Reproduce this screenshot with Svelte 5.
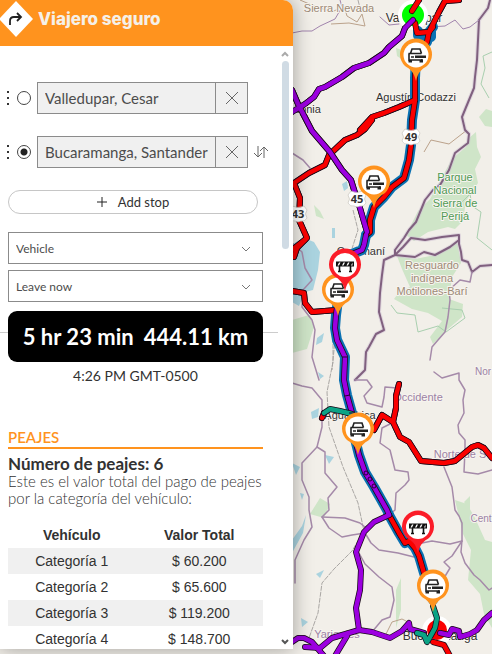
<script>
  let origin = $state('Valledupar, Cesar');
  let destination = $state('Bucaramanga, Santander');
  let active = $state('b');

  const tolls = [
    ['Categoría 1', '$ 60.200'],
    ['Categoría 2', '$ 65.600'],
    ['Categoría 3', '$ 119.200'],
    ['Categoría 4', '$ 148.700']
  ];

  const borders = [
    '490,0 488,8 479,20 477,60 475,77 474,88 469,100 462,117 465,130 469,134 468,143 455,153 449,170 440,185 433,190 425,200 416,222 409,230 404,238 395,250 395,255 384,260 382,275 380,293 379,312 384,330 376,334 369,347 366,352 365,370 355,380',
    '395,255 403,247 411,238 425,240 442,237 459,235 459,244 461,252 462,260 468,262 472,272 480,266 492,265',
    '395,255 415,257 424,252 435,255 450,247 459,240'
  ];
  const softBorders = [
    '472,272 470,282 460,280 449,290 450,300 448,317 445,332 438,340 432,347 430,360',
    '434,372 442,378 459,373 459,380 465,390 463,400 464,413 458,425 459,433 465,440 465,450 464,472 478,474 492,470',
    '444,467 452,487 455,510 459,516 462,523 462,540 461,552 465,563 474,575 480,580 489,590 492,588',
    '462,541 450,544 432,541 422,543',
    '462,541 452,556 444,562 450,568 444,578',
    '292,383 302,386 312,388 322,400 322,427 317,447 302,463 302,480 309,497 309,510 312,527 304,540 295,560 295,583',
    '317,447 325,452 325,473 337,487 328,498 329,510 322,517 329,528 342,537 352,535 365,533 371,543 379,550 398,553 414,557',
    '322,517 345,518 360,523 365,527 383,520 395,510 396,493 405,485 409,480 408,472 395,470 390,450 380,443 382,428 392,423',
    '359,553 365,564 379,577 392,587 394,600 390,617 382,620 372,632',
    '355,380 367,380 372,387 364,396 367,403 382,407 384,397 385,387 397,388 400,394',
    '292,243 302,252 305,268 312,280 303,290 302,307 312,320 315,330 312,357 319,380',
    '292,153 303,160 310,168'
  ];
  const thin = [
    '292,33 302,31 312,31 320,26 335,19 342,7 340,0',
    '430,27 445,26 455,20 463,29 470,27 479,20',
    '380,17 389,25 399,24'
  ];

  const west = '413,20 405,28 402,36 389,47 384,53 369,63 354,68 342,77 325,87 319,89 314,97 305,104 292,112';
  const south = '292,90 298,104 312,131 330,152 342,170 351,180 355,193 360,208 367,232';
  const mainRed = '433,27 429,32 427,42 416,56 415,78 415,100 412,120 411,145 409,160 404,178 392,187 384,197 374,207 370,220 370,232 366,235';
  const mainPurple = '366,235 364,245 362,250 352,254 343,270 338,300 336,315 335,328 337,340 345,357 344,380 347,395 352,413 354,435 359,455 365,472 374,487 387,510 389,515';
  const mainEnd = '389,515 399,533 405,543 409,541 415,548 419,556 424,573 433,600';
  const reds = [
    '419,0 412,11',
    '459,0 445,1 439,12 429,32 417,33 415,23',
    '415,100 399,107 384,113 372,117 360,130',
    '372,120 365,129 357,135 345,140 329,155 325,165 309,173 294,183 300,198 299,220 307,238 292,250',
    '305,240 297,248 294,257',
    '292,291 304,293 305,303 312,312 337,310',
    '322,418 324,413',
    '374,430 382,415 393,422 400,437 409,442 421,461 444,463 455,461 472,447 478,445 484,448 492,458',
    '393,422 396,408 396,396 399,384'
  ];
  const purples = [
    '389,515 374,522 364,532 356,552 361,570 360,590 356,608 359,630',
    '292,642 298,638 304,638 312,642 324,656',
    '305,647 320,648 332,638 359,630 372,632 390,638 402,631 409,623 410,629 424,633',
    '335,656 347,636',
    '440,633 449,635 452,629 459,631 460,637 470,634 477,630 484,620 492,613'
  ];

  const cars = [[416, 55], [374, 182], [338, 290], [358, 429], [433, 586]];
  const gates = [[345, 265], [418, 527]];
  const shields = [['49', 411, 137], ['45', 357, 199], ['43', 298, 214]];
</script>

<main>
  <svg class="map" viewBox="0 0 492 654" preserveAspectRatio="xMinYMin slice" role="img" aria-label="Mapa de la ruta">
    <rect width="492" height="654" fill="#f2efe9" />
    <g fill="#cfe5c8">
      <path d="M469 138l7-6 1 15 4 10-6 12 3 14-12 18-3 20-8 8-7-2-20 5-14 9-8-6 12-24 12-12 22-40 14-12z" />
      <path d="M397 256l18 3 20-4 22-14 4 22-9 14-3 22 14 5-1 13-14 12-15 15-3-7 12-16-14-8-16-4-18-10 6-8 10-4-8-18z" />
      <path d="M292 320l17-5 5 12-7 22-15 4zM455 500l12 4 8 14 10 22 7 2v86l-8-14-4-20-12-14 3-30-8-16zM320 498l10 6-6 14-14-4zM396 48l6 2 1 10-6-4zM479 117l7-8 6 2v16l-7-1zM314 205l6 6 4 8-8-3zM396 590l5-12v32l-5 18zM470 510l-6-8 6-6z" />
    </g>
    <g fill="none" stroke="#a9cfaf" stroke-width="1">
      <path d="M492 52l-9 4 2 12-4 16 8 14M458 206l12-12 2 12 9 6-4 26 15 12M391 305l6 8 18 2 3 17 20-6 8 6 19-14-3-8-20-2" />
    </g>
    <g fill="#aad3df">
      <path d="M292 244l12-6 10 4 6 10-2 18-5 20-8 2-6 14-7-4z" />
      <path d="M342 184l5-3 1 7-4 3zM332 228h3v10h-3zM317 338l7-5-2 9-6 3zM318 372l6 4-4 3zM292 463l8 4-4 8zM311 412l8-4-1 9-6 2zM325 455l9 2-5 7zM300 493l4 1-2 6zM301 618l7 4-6 5zM316 574l8-4-4 8zM292 540l10-14 4-11-3 18-11 20z" />
    </g>
    <g fill="none" stroke="#bba28b" stroke-width="1">
      <path d="M300 0l14 6 18 6 12-6 3 10 10 6 5-8 3 12-16-3-18 1M424 152l7-12 18 4 18-14M385 636l7-14 10-3 8 4" />
    </g>
    <g fill="none" stroke="#aaa7a4" stroke-width="1" stroke-dasharray="5 1">
      <path d="M367 232l-8 20-16 20-8 30-2 30 0 30-6 30 2 35 14 40 15 36 6 28-12 20-18 18-12 14-4 30-9 25M358 0l2 8M353 210l5 20-9 28M337 320l-5 50" />
    </g>

    <g class="line border-halo">
      {#each borders as p}<polyline points={p} />{/each}
    </g>
    <g class="line border">
      {#each borders as p}<polyline points={p} />{/each}
    </g>
    <g class="line soft">
      {#each softBorders as p}<polyline points={p} />{/each}
    </g>
    <g class="line thin">
      {#each thin as p}<polyline points={p} />{/each}
    </g>

    <g class="labels">
      <g fill="#9d8a76">
        <text x="339" y="12">Sierra Nevada</text>
        <text x="432" y="269">Resguardo</text>
        <text x="432" y="282">indígena</text>
        <text x="432" y="295">Motilones-Barí</text>
      </g>
      <g fill="#4f9a54">
        <text x="455" y="181">Parque</text>
        <text x="455" y="194">Nacional</text>
        <text x="455" y="207">Sierra de</text>
        <text x="455" y="220">Perijá</text>
      </g>
      <g fill="#9c82a5">
        <text x="418" y="401">Occidente</text>
        <text x="460" y="458">Norte de S</text>
        <text x="483" y="375" font-size="10">Nor</text>
        <text x="481" y="522" font-size="10">Cent</text>
        <text x="337" y="638">Yariguíes</text>
      </g>
    </g>

    <g class="line casing"><polyline points={west} /><polyline points={south} /></g>
    <g class="line purple"><polyline points={west} /><polyline points={south} /></g>
    <g class="line casing">{#each reds as p}<polyline points={p} />{/each}</g>

    <g class="labels towns">
      <text class="city" x="414" y="22">Valledupar</text>
      <text x="416" y="101">Agustín Codazzi</text>
      <text x="298" y="113">Fundonia</text>
      <text x="361" y="255">Curumaní</text>
      <text x="350" y="419">Aguachica</text>
      <text class="city" x="440" y="640">Bucaramanga</text>
    </g>
    <circle cx="413" cy="15" r="15" fill="#fff" />
    <circle cx="437" cy="631" r="15" fill="#fff" />
    <circle cx="413" cy="15" r="11" fill="#0f0" />
    <circle cx="437" cy="630" r="10" fill="#fa0000" />

    <g class="line route">
      <polyline points={mainRed} /><polyline points={mainPurple} /><polyline points={mainEnd} />
      <polyline points="418,31 418,35 431,37 431,32" />
    </g>
    <g class="line casing">
      <polyline points={mainRed} /><polyline points={mainEnd} />
      {#each reds as p}<polyline points={p} />{/each}
    </g>
    <g class="line red">
      <polyline points={mainRed} /><polyline points={mainEnd} />
      {#each reds as p}<polyline points={p} />{/each}
    </g>
    <g class="line casing">
      <polyline points={west} /><polyline points={south} /><polyline points={mainPurple} />
      {#each purples as p}<polyline points={p} />{/each}
    </g>
    <g class="line purple">
      <polyline points={west} /><polyline points={south} /><polyline points={mainPurple} />
      {#each purples as p}<polyline points={p} />{/each}
    </g>
    <g class="line casing">
      <polyline points="324,413 330,409 340,411 352,414" />
      <polyline points="433,606 437,618 435,628 430,637 427,642 424,635 417,633" />
      <polyline points="433,642 444,645 450,656" />
    </g>
    <g class="line teal">
      <polyline points="324,413 330,409 340,411 352,414" />
      <polyline points="433,606 437,618 435,628 430,637 427,642 424,635 417,633" />
    </g>
    <g class="line red"><polyline points="433,642 444,645 450,656" /></g>
    <g fill="none" stroke="#210036" stroke-width="1">
      <circle cx="366" cy="473" r="2" /><circle cx="370" cy="479" r="2" /><circle cx="374" cy="486" r="2" />
      <path d="M342 357h5M345 396l5-1M349 413h6" />
    </g>

    {#each shields as [n, x, y]}
      <g transform="translate({x} {y})">
        <path d="M-6-8q6 3 12 0l3 4q-3 4 0 8-2 4-6 3l-3 1-3-1q-4 1-6-3 3-4 0-8z" fill="#fff" stroke="#c9c5bf" stroke-width=".7" />
        <text class="shield" y="4">{n}</text>
      </g>
    {/each}

    {#each cars as [x, y]}
      <g transform="translate({x} {y})">
        <path d="M0 26C-2 17-6 14-11 11A16 16 0 1 1 11 11C6 14 2 17 0 26z" fill="#ff931e" />
        <circle r="12.5" fill="#fff" />
        <path d="M-5.500-1.500l1.500-4.500h8l1.500 4.500M-7.500-1.500h13M-7-1.500v6.500H6V4M-5 2h3" fill="none" stroke="#222" stroke-width="1.600" />
        <path d="M-1 0.500h11v2.500H-1zM-7.500 5h3.500v2.500h-3.500zM3.500 5H7v2.500H3.500z" fill="#222" />
      </g>
    {/each}
    {#each gates as [x, y]}
      <g transform="translate({x} {y})">
        <path d="M0 26C-2 17-6 14-11 11A16 16 0 1 1 11 11C6 14 2 17 0 26z" fill="#fb1c28" />
        <circle r="12" fill="#fff" />
        <path d="M-9-3.500H9V1.500H-9z" fill="#111" />
        <path d="M-7.500 .5l1.500-3h1.500l-1.500 3zM-3 .5l1.500-3H0L-1.500 .5zM1.500 .5l1.500-3h1.500L3 .5zM6 .5l1.500-3v3z" fill="#fff" />
        <path d="M-5.500 1v5.500M5.500 1v5.500M-7 6.500h3M4 6.500h3" stroke="#111" stroke-width="1.600" />
      </g>
    {/each}
  </svg>

  <section class="panel">
    <header>
      <svg width="36" height="38" viewBox="0 0 36 38" aria-hidden="true">
        <path d="M0 19L17 1L34 19L17 37z" fill="#fff" />
        <path d="M11 25v-4q0-4 4-4h7M18 13l4 4-4 4" fill="none" stroke="#222" stroke-width="1.800" />
      </svg>
      <h1>Viajero seguro</h1>
    </header>

    <div class="scroller">
      <div class="content">
        <div class="stop">
          <svg class="grip" viewBox="0 0 4 16" aria-hidden="true"><path d="M0 1h2v2H0zM0 7h2v2H0zM0 13h2v2H0z" /></svg>
          <input type="radio" name="stop" value="a" bind:group={active} aria-label="Origen" />
          <div class="field">
            <input type="text" bind:value={origin} aria-label="Punto de partida" />
            <button aria-label="Borrar origen" onclick={() => (origin = '')}>
              <svg width="12" height="12" viewBox="0 0 12 12"><path d="M0 0l12 12M12 0L0 12" /></svg>
            </button>
          </div>
        </div>
        <div class="stop">
          <svg class="grip" viewBox="0 0 4 16" aria-hidden="true"><path d="M0 1h2v2H0zM0 7h2v2H0zM0 13h2v2H0z" /></svg>
          <input type="radio" name="stop" value="b" bind:group={active} aria-label="Destino" />
          <div class="field">
            <input type="text" bind:value={destination} aria-label="Punto de llegada" />
            <button aria-label="Borrar destino" onclick={() => (destination = '')}>
              <svg width="12" height="12" viewBox="0 0 12 12"><path d="M0 0l12 12M12 0L0 12" /></svg>
            </button>
          </div>
          <button class="swap" aria-label="Invertir" onclick={() => ([origin, destination] = [destination, origin])}>
            <svg width="16" height="14" viewBox="0 0 16 14"><path d="M5 1v11M1 8l4 4 4-4M11 13V2M7 6l4-4 4 4" /></svg>
          </button>
        </div>

        <button class="add">
          <svg width="10" height="10" viewBox="0 0 10 10" aria-hidden="true"><path d="M5 0v10M0 5h10" /></svg>
          Add stop
        </button>

        <div class="select">
          <select aria-label="Travel mode"><option>Vehicle</option></select>
          <svg width="10" height="6" viewBox="0 0 10 6" aria-hidden="true"><path d="M1 1l4 4 4-4" /></svg>
        </div>
        <div class="select">
          <select aria-label="Departure"><option>Leave now</option></select>
          <svg width="10" height="6" viewBox="0 0 10 6" aria-hidden="true"><path d="M1 1l4 4 4-4" /></svg>
        </div>

        <div class="total">
          <p class="summary"><span>5 hr 23 min</span><span>444.11 km</span></p>
        </div>
        <p class="arrival">4:26 PM GMT-0500</p>

        <h2>PEAJES</h2>
        <h3>Número de peajes: 6</h3>
        <p class="note">Este es el valor total del pago de peajes por la categoría del vehículo:</p>

        <table>
          <thead><tr><th>Vehículo</th><th>Valor Total</th></tr></thead>
          <tbody>
            {#each tolls as [name, price]}
              <tr><td>{name}</td><td>{price}</td></tr>
            {/each}
          </tbody>
        </table>
      </div>
      <div class="bar" aria-hidden="true">
        <svg width="8" height="6" viewBox="0 0 8 6"><path d="M1 5l3-3 3 3" stroke="#aaa" /></svg>
        <span class="thumb"></span>
        <svg width="8" height="6" viewBox="0 0 8 6"><path d="M1 1l3 3 3-3" stroke="#555" /></svg>
      </div>
    </div>
  </section>
</main>

<style>
  :global(body) { margin: 0; overflow: hidden; }
  main {
    position: relative;
    height: 100vh;
    overflow: hidden;
    background: #f2efe9;
    color: #323232;
    font-family: Lato, "Open Sans", sans-serif;
  }
  * { box-sizing: border-box; }
  h1, h2, h3, p { margin: 0; }
  button { font: inherit; color: inherit; background: none; border: 0; padding: 0; }

  .map { position: absolute; inset: 0; width: 100%; height: 100%; }
  .line { fill: none; stroke-linejoin: round; stroke-linecap: round; }
  .border-halo { stroke: #cdbfd2; stroke-width: 4; opacity: 0.5; }
  .border { stroke: #80607f; stroke-width: 2; }
  .soft { stroke: #a58aa9; stroke-width: 1.5; }
  .thin { stroke: #a184ad; stroke-width: 1; }
  .route { stroke: #0a71b3; stroke-width: 10; }
  .casing { stroke: #180818; stroke-width: 6; }
  .red { stroke: #fa0000; stroke-width: 4.5; }
  .purple { stroke: #9c00e0; stroke-width: 4.5; }
  .teal { stroke: #0ba385; stroke-width: 4.5; }
  .labels { font: 11px "Liberation Sans", sans-serif; text-anchor: middle; paint-order: stroke; stroke: #f7f4ef; stroke-width: 2px; stroke-linejoin: round; }
  .towns { fill: #333; }
  .city { font-size: 12px; }
  .shield { font: bold 11px "Noto Sans", sans-serif; fill: #333; text-anchor: middle; }

  .panel {
    position: relative;
    display: flex;
    flex-direction: column;
    width: 60%;
    min-width: 293px;
    max-width: 293px;
    height: calc(100% - 5px);
    background: #fff;
    border-top-right-radius: 10px;
    box-shadow: 0 0 20px rgba(0, 0, 0, 0.35);
  }
  header {
    display: flex;
    flex: none;
    align-items: flex-start;
    gap: 3px;
    height: 46px;
    background: #ff931e;
    border-top-right-radius: 10px;
  }
  header svg { margin-left: -1px; }
  h1 { font: 800 17px/38px Inter, sans-serif; color: #f5f0e8; }

  .scroller { display: flex; flex: 1; min-height: 0; overflow: hidden; }
  .content { flex: 1; min-width: 0; padding: 36px 18px 0 8px; }
  .bar { display: flex; flex-direction: column; align-items: center; width: 8px; margin: 5px 4px 4px 0; }
  .bar svg { flex: none; fill: none; stroke-width: 2; }
  .thumb { width: 7px; height: 188px; margin: 4px 0 auto; border-radius: 4px; background: #d0dbe4; }

  .stop { display: flex; align-items: center; height: 32px; margin-bottom: 22px; }
  .grip { flex: none; width: 4px; height: 16px; margin: 0 5px 0 -1px; fill: #333; }
  .stop input[type="radio"] {
    appearance: none;
    flex: none;
    width: 14px;
    height: 14px;
    margin: 0 6px 0 1px;
    border: 1px solid #444;
    border-radius: 50%;
    background: #fff;
  }
  .stop input[type="radio"]:checked { background: radial-gradient(circle, #222 0 3px, #fff 4px); }
  .field { display: flex; flex: none; width: 211px; height: 32px; border: 1px solid #8b8b8b; background: #f0f0f0; }
  .field input {
    flex: 1;
    min-width: 0;
    padding: 0 0 0 7px;
    border: 0;
    outline: 0;
    background: none;
    font: 15px Lato, sans-serif;
    color: #4c4c4c;
  }
  .field button { display: grid; place-items: center; width: 32px; border-left: 1px solid #8b8b8b; }
  .field svg, .swap svg { fill: none; stroke: #666; stroke-width: 1; }
  .swap { display: grid; flex: none; margin-left: 5px; }

  .add {
    display: flex;
    align-items: center;
    justify-content: center;
    gap: 11px;
    width: 250px;
    height: 24px;
    margin-bottom: 18px;
    border: 1px solid #c6c6c6;
    border-radius: 12px;
    font-size: 13px;
  }
  .add svg { stroke: #222; stroke-width: 1; }

  .select { position: relative; margin-bottom: 6px; height: 32px; width: 255px; }
  .select select {
    appearance: none;
    width: 100%;
    height: 32px;
    padding: 0 7px;
    border: 1px solid #8b8b8b;
    border-radius: 0;
    background: #fff;
    font: 12px Lato, sans-serif;
    color: #4c4c4c;
  }
  .select svg { position: absolute; right: 12px; top: 14px; fill: none; stroke: #777; }

  .total {
    margin: 9px -15px 0 -8px;
    padding-left: 8px;
    background: linear-gradient(#ccc, #ccc) 0 21px / 100% 1px no-repeat;
  }
  .summary {
    display: flex;
    justify-content: center;
    gap: 10px;
    width: 255px;
    height: 51px;
    border-radius: 9px;
    background: #000;
    color: #fff;
    font: 700 22px/51px Lato, sans-serif;
    white-space: nowrap;
  }
  .arrival { width: 255px; margin-top: 5px; font-size: 14px; line-height: 18px; text-align: center; }
  h2 {
    width: 255px;
    margin-top: 43px;
    border-bottom: 2px solid #ff931e;
    font-size: 15px;
    font-weight: 600;
    line-height: 19px;
    color: #ff931e;
  }
  h3 { margin-top: 6px; font-size: 17px; line-height: 18px; }
  .note { width: 260px; margin-right: -5px; font-size: 15px; line-height: 17px; font-weight: 300; color: #323232; }
  table {
    width: 257px;
    margin-top: 15px;
    border-collapse: collapse;
    font: 14px/26px "Liberation Sans", Arial, sans-serif;
    text-align: center;
  }
  table { width: 255px; }
  th, td { width: 50%; padding: 0; }
  tbody tr:nth-child(odd) { background: #f0f0f0; }
</style>
